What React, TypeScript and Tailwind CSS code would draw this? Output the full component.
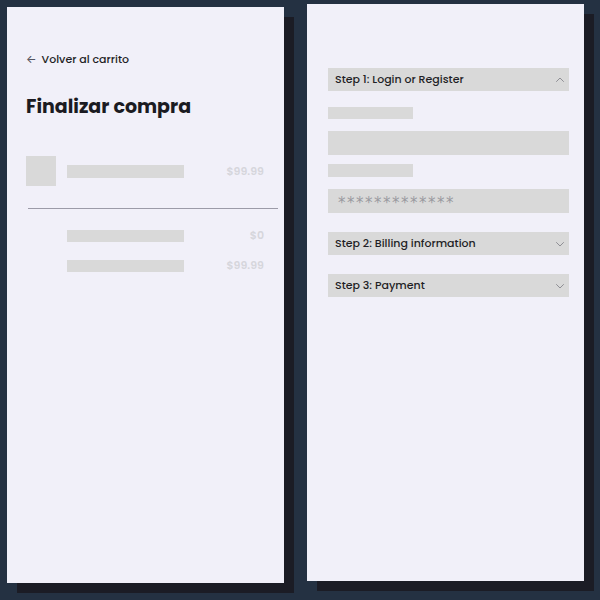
import React from "react";

const font = { fontFamily: "Poppins, Inter, 'Noto Sans', sans-serif" };

function ChevronUp() {
  return (
    <svg width="10" height="10" viewBox="0 0 10 10" fill="none" stroke="#8f8f95" strokeWidth="1" strokeLinecap="round">
      <path d="M1.5 6.5 L5 3 L8.5 6.5" />
    </svg>
  );
}

function ChevronDown() {
  return (
    <svg width="10" height="10" viewBox="0 0 10 10" fill="none" stroke="#8f8f95" strokeWidth="1" strokeLinecap="round">
      <path d="M1.5 3.5 L5 7 L8.5 3.5" />
    </svg>
  );
}

function StepHeader({ label, open }: { label: string; open?: boolean }) {
  return (
    <div className="flex h-[23px] items-center justify-between bg-[#d9d9d9] pl-[7px] pr-[4px]">
      <span className="text-[11px] font-medium text-[#1f1f26] leading-none">{label}</span>
      {open ? <ChevronUp /> : <ChevronDown />}
    </div>
  );
}

function SummaryRow({ price }: { price: string }) {
  return (
    <div className="flex h-[13px] items-center">
      <div className="ml-[41px] h-[12px] w-[117px] bg-[#d9d9d9]" />
      <span className="ml-auto text-[11px] font-semibold leading-none text-[#d6d6dc]">{price}</span>
    </div>
  );
}

export default function App() {
  return (
    <div className="flex h-[600px] w-[600px] items-start bg-[#243142]" style={font}>
      {/* cart summary */}
      <div className="ml-[7px] mt-[7px] flex h-[576px] w-[277px] flex-col bg-[#f1f0f9] pl-[19px] pr-[20px] pt-[44px] shadow-[10px_10px_0_#1b1c25]">
        <div className="flex h-[16px] items-center text-[11px] font-medium text-[#1f1f26]">
          <span className="mr-[5px] text-[11px] text-[#55555e]">←</span>
          <span>Volver al carrito</span>
        </div>
        <h1 className="mt-[26px] h-[28px] text-[19px] font-bold leading-[28px] text-[#1b1b22]">Finalizar compra</h1>
        <div className="mt-[35px] flex h-[30px] items-center">
          <div className="h-[30px] w-[30px] bg-[#d9d9d9]" />
          <div className="ml-[11px] h-[13px] w-[117px] bg-[#d9d9d9]" />
          <span className="ml-auto text-[11px] font-semibold leading-none text-[#d6d6dc]">$99.99</span>
        </div>
        <div className="ml-[2px] mr-[-14px] mt-[22px] h-px bg-[#9c9ba8]" />
        <div className="mt-[20px] flex flex-col gap-[17px]">
          <SummaryRow price="$0" />
          <SummaryRow price="$99.99" />
        </div>
      </div>

      {/* checkout steps */}
      <div className="ml-[23px] mt-[4px] flex h-[577px] w-[277px] flex-col bg-[#f1f0f9] pl-[21px] pr-[15px] pt-[64px] shadow-[10px_10px_0_#1b1c25]">
        <StepHeader label="Step 1: Login or Register" open />
        <div className="mt-[16px] h-[12px] w-[85px] bg-[#d9d9d9]" />
        <div className="mt-[12px] h-[24px] bg-[#d9d9d9]" />
        <div className="mt-[9px] h-[13px] w-[85px] bg-[#d9d9d9]" />
        <div className="mt-[12px] flex h-[24px] items-center bg-[#d9d9d9] pl-[10px]">
          <span
            className="pt-[4px] text-[15px] leading-none tracking-[1.5px] text-[#9a9aa0]"
            style={{ fontFamily: "'DejaVu Sans', sans-serif" }}
          >
            *************
          </span>
        </div>
        <div className="mt-[19px]">
          <StepHeader label="Step 2: Billing information" />
        </div>
        <div className="mt-[19px]">
          <StepHeader label="Step 3: Payment" />
        </div>
      </div>
    </div>
  );
}
